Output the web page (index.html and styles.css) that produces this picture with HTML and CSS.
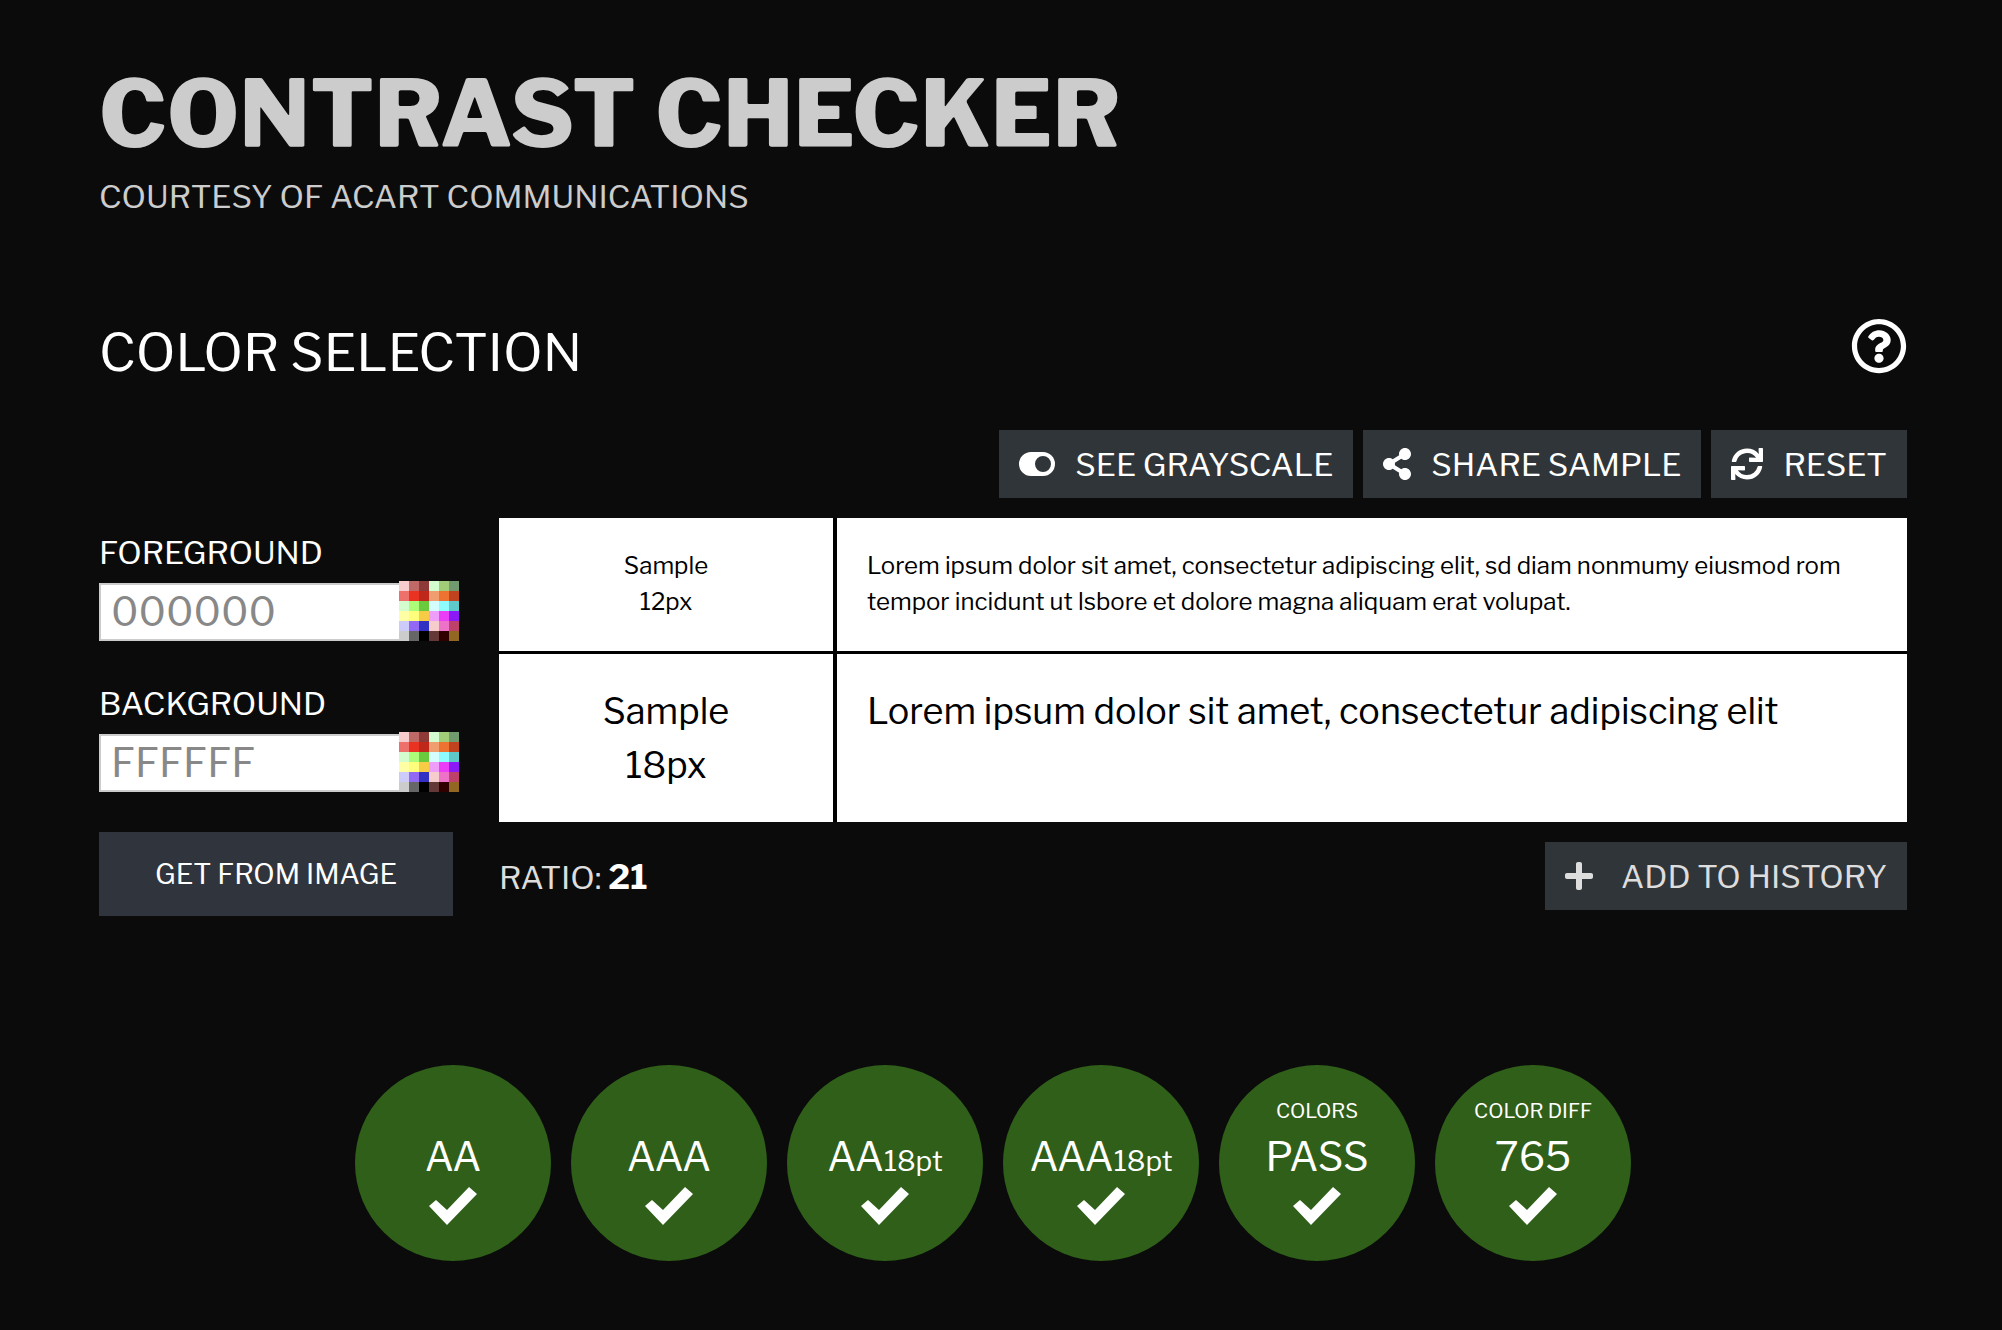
FILE: index.html
```
<!DOCTYPE html>
<html lang="en">
<head>
  <meta charset="UTF-8" />
  <meta name="viewport" content="width=device-width, initial-scale=1.0" />
  <title>Contrast Checker</title>
  <link rel="stylesheet" href="styles.css">
</head>
<body>
  <!-- icons shared by the page -->
  <svg class="sprite" aria-hidden="true">
    <symbol id="swatches" viewBox="0 0 60 60">
      <path fill="#f6cccc" d="M0 0h10v10H0z"/><path fill="#c06a68" d="M10 0h10v10H10z"/><path fill="#8e3a38" d="M20 0h10v10H20z"/><path fill="#d3fdcf" d="M30 0h10v10H30z"/><path fill="#a3cc78" d="M40 0h10v10H40z"/><path fill="#719a6e" d="M50 0h10v10H50z"/>
      <path fill="#ee706b" d="M0 10h10v10H0z"/><path fill="#ea3223" d="M10 10h10v10H10z"/><path fill="#bf271b" d="M20 10h10v10H20z"/><path fill="#f09d70" d="M30 10h10v10H30z"/><path fill="#ee7230" d="M40 10h10v10H40z"/><path fill="#c1421f" d="M50 10h10v10H50z"/>
      <path fill="#d3fdcf" d="M0 20h10v10H0z"/><path fill="#acfb79" d="M10 20h10v10H10z"/><path fill="#6aca3e" d="M20 20h10v10H20z"/><path fill="#d3fdfe" d="M30 20h10v10H30z"/><path fill="#8efbfd" d="M40 20h10v10H40z"/><path fill="#5fc9c9" d="M50 20h10v10H50z"/>
      <path fill="#fefea5" d="M0 30h10v10H0z"/><path fill="#fffe7c" d="M10 30h10v10H10z"/><path fill="#f6cb45" d="M20 30h10v10H20z"/><path fill="#ee9df8" d="M30 30h10v10H30z"/><path fill="#ea3ff7" d="M40 30h10v10H40z"/><path fill="#8c1af6" d="M50 30h10v10H50z"/>
      <path fill="#cccbfa" d="M0 40h10v10H0z"/><path fill="#9169f5" d="M10 40h10v10H10z"/><path fill="#3130c3" d="M20 40h10v10H20z"/><path fill="#f6cccc" d="M30 40h10v10H30z"/><path fill="#ee72c7" d="M40 40h10v10H40z"/><path fill="#bd4168" d="M50 40h10v10H50z"/>
      <path fill="#cccccc" d="M0 50h10v10H0z"/><path fill="#666666" d="M10 50h10v10H10z"/><path fill="#000000" d="M20 50h10v10H20z"/><path fill="#633836" d="M30 50h10v10H30z"/><path fill="#300000" d="M40 50h10v10H40z"/><path fill="#916722" d="M50 50h10v10H50z"/>
    </symbol>
    <symbol id="check" viewBox="0 0 48 38">
      <path d="M0 19l7-6 11 10L40 0l8 7-30 31z"/>
    </symbol>
  </svg>

  <header class="page-header">
    <h1>CONTRAST CHECKER</h1>
    <p>COURTESY OF ACART COMMUNICATIONS</p>
  </header>

  <main>
    <div class="section-head">
      <h2>COLOR SELECTION</h2>
      <button type="button" class="help" aria-label="Help">
        <svg viewBox="0 0 512 512"><path d="M256 8C119 8 8 119 8 256s111 248 248 248 248-111 248-248S393 8 256 8zm0 448c-110.500 0-200-89.400-200-200 0-110.500 89.500-200 200-200 110.500 0 200 89.500 200 200 0 110.500-89.400 200-200 200zm107-256c0 67-72 68-72 93v6c0 7-5 12-12 12h-46c-7 0-12-5-12-12v-9c0-35 27-49 47-61 17-9 28-16 28-29 0-17-22-28-40-28-23 0-34 11-49 30-4 5-11 6-17 2l-28-21c-5-4-6-11-3-17 24-35 54-55 102-55 50 0 102 39 102 89zM298 368c0 23-19 42-42 42s-42-19-42-42 19-42 42-42 42 19 42 42z"/></svg>
      </button>
    </div>

    <div class="toolbar">
      <button type="button" class="btn">
        <svg class="wide" viewBox="0 0 576 384"><path fill-rule="evenodd" d="M192 0h192a192 192 0 0 1 0 384H192a192 192 0 0 1 0-384zm192 64a128 128 0 1 0 0 256 128 128 0 0 0 0-256z"/></svg>
        SEE GRAYSCALE
      </button>
      <button type="button" class="btn">
        <svg class="share" viewBox="0 0 448 512"><path d="M352 320c-22.600 0-43.400 7.800-59.800 20.900l-102.500-64.100a96.600 96.600 0 0 0 0-41.600l102.500-64.100C308.600 184.200 329.400 192 352 192c53 0 96-43 96-96S405 0 352 0s-96 43-96 96c0 7.200.8 14.100 2.300 20.800l-102.500 64.100C139.400 167.800 118.600 160 96 160c-53 0-96 43-96 96s43 96 96 96c22.600 0 43.400-7.800 59.800-20.900l102.500 64.100A96.300 96.300 0 0 0 256 416c0 53 43 96 96 96s96-43 96-96-43-96-96-96z"/></svg>
        SHARE SAMPLE
      </button>
      <button type="button" class="btn">
        <svg viewBox="0 0 512 512"><path d="M440.700 12.600l4 82.800A247.200 247.200 0 0 0 255.800 8C134.700 8 33.900 94.900 12.300 209.800A12 12 0 0 0 24.100 224h49.100a12 12 0 0 0 11.700-9.300 175.900 175.900 0 0 1 317-56.900l-101.500-4.900a12 12 0 0 0-12.600 12v47.400a12 12 0 0 0 12 12H500a12 12 0 0 0 12-12V12a12 12 0 0 0-12-12h-47.400a12 12 0 0 0-11.900 12.600zM255.800 432a175.600 175.600 0 0 1-146-77.800l101.800 4.900a12 12 0 0 0 12.600-12v-47.400a12 12 0 0 0-12-12H12a12 12 0 0 0-12 12V500a12 12 0 0 0 12 12h47.400a12 12 0 0 0 12-12.600l-4.200-82.600A247.200 247.200 0 0 0 255.800 504c121.100 0 221.900-86.900 243.500-201.800a12 12 0 0 0-11.800-14.200h-49.100a12 12 0 0 0-11.700 9.300A175.900 175.900 0 0 1 255.800 432z"/></svg>
        RESET
      </button>
    </div>

    <div class="checker">
      <form class="colors">
        <div class="field">
          <label for="foreground">FOREGROUND</label>
          <div class="picker">
            <input type="text" id="foreground" value="000000" maxlength="6" />
            <button type="button" class="swatch" aria-label="Pick foreground"><svg><use href="#swatches"/></svg></button>
          </div>
        </div>
        <div class="field">
          <label for="background">BACKGROUND</label>
          <div class="picker">
            <input type="text" id="background" value="FFFFFF" maxlength="6" />
            <button type="button" class="swatch" aria-label="Pick background"><svg><use href="#swatches"/></svg></button>
          </div>
        </div>
        <button type="button" class="from-image">GET FROM IMAGE</button>
      </form>

      <div class="preview">
        <table class="samples">
          <tr class="small">
            <th scope="row">Sample<br>12px</th>
            <td>Lorem ipsum dolor sit amet, consectetur adipiscing elit, sd diam nonmumy eiusmod rom tempor incidunt ut lsbore et dolore magna aliquam erat volupat.</td>
          </tr>
          <tr class="large">
            <th scope="row">Sample<br>18px</th>
            <td>Lorem ipsum dolor sit amet, consectetur adipiscing elit</td>
          </tr>
        </table>
        <div class="summary">
          <p>RATIO: <strong>21</strong></p>
          <button type="button" class="btn muted">
            <svg class="plus" viewBox="0 0 448 448"><path d="M416 176H272V32c0-18-14-32-32-32h-32c-18 0-32 14-32 32v144H32c-18 0-32 14-32 32v32c0 18 14 32 32 32h144v144c0 18 14 32 32 32h32c18 0 32-14 32-32V272h144c18 0 32-14 32-32v-32c0-18-14-32-32-32z"/></svg>
            ADD TO HISTORY
          </button>
        </div>
      </div>
    </div>

    <ul class="results">
      <li><span class="score">AA</span><svg><use href="#check"/></svg></li>
      <li><span class="score">AAA</span><svg><use href="#check"/></svg></li>
      <li><span class="score">AA<small>18pt</small></span><svg><use href="#check"/></svg></li>
      <li><span class="score">AAA<small>18pt</small></span><svg><use href="#check"/></svg></li>
      <li><span class="caption">COLORS</span><span class="score">PASS</span><svg><use href="#check"/></svg></li>
      <li><span class="caption">COLOR DIFF</span><span class="score">765</span><svg><use href="#check"/></svg></li>
    </ul>
  </main>
</body>
</html>
```
FILE: styles.css
```
:root {
  --bg: #0b0b0b;
  --text: #ffffff;
  --muted: #cccccc;
  --button: #303539;
  --pass: #2f5f19;
}

* {
  box-sizing: border-box;
}

body {
  font-family: "Libre Franklin", "Liberation Sans", Arial, sans-serif;
  background: var(--bg);
  color: var(--text);
  margin: 0;
  padding: 58px 95px 68px 99px;
}

h1, h2, p, ul {
  margin: 0;
}

svg {
  display: block;
  fill: currentColor;
}

button {
  font-family: inherit;
  color: inherit;
  border: none;
  padding: 0;
  cursor: pointer;
}

.sprite {
  position: absolute;
  width: 0;
  height: 0;
}

/* Header */
.page-header {
  color: var(--muted);
}

h1 {
  font-size: 93px;
  font-weight: 800;
  line-height: 112px;
}

.page-header p {
  font-size: 32px;
  line-height: 54px;
}

.section-head {
  display: flex;
  justify-content: space-between;
  align-items: flex-start;
  margin-top: 92px;
}

h2 {
  font-size: 52px;
  font-weight: 400;
  line-height: 74px;
}

.help {
  background: none;
  margin-top: 2px;
}

.help svg {
  width: 56px;
  height: 56px;
}

/* Buttons */
.toolbar {
  display: flex;
  justify-content: flex-end;
  gap: 10px;
  margin-top: 40px;
}

.btn {
  display: flex;
  align-items: center;
  gap: 20px;
  height: 68px;
  padding: 0 20px;
  font-size: 32px;
  background: var(--button);
}

.btn svg {
  width: 32px;
  height: 32px;
}

.btn svg.wide {
  width: 36px;
  height: 24px;
}

.btn svg.share {
  width: 28px;
}

.btn svg.plus {
  width: 28px;
  height: 28px;
}

.btn.muted {
  color: #dddddd;
  gap: 28px;
}

/* Colour inputs and samples */
.checker {
  display: grid;
  grid-template-columns: 360px 1fr;
  gap: 40px;
  margin-top: 20px;
}

.colors {
  padding-top: 12px;
}

.field {
  margin-bottom: 40px;
}

.field label {
  display: block;
  font-size: 32px;
  line-height: 46px;
  margin-bottom: 5px;
}

.picker {
  display: flex;
  align-items: flex-end;
}

.picker input {
  flex: 1;
  min-width: 0;
  height: 58px;
  padding: 0 10px 2px;
  font-family: inherit;
  font-size: 40px;
  color: #888888;
  background: #ffffff;
  border: 2px solid #cccccc;
  border-right: none;
}

.swatch svg {
  width: 60px;
  height: 60px;
}

.from-image {
  display: block;
  width: 354px;
  height: 84px;
  font-size: 28px;
  background: #30343c;
}

.samples {
  width: 100%;
  background: #000000;
  border-collapse: collapse;
  color: #000000;
}

.samples th,
.samples td {
  background: #ffffff;
  font-weight: 400;
  text-align: left;
  vertical-align: top;
  padding: 30px 30px 28px;
}

.samples th {
  width: 336px;
  text-align: center;
  border-right: 4px solid #000000;
}

.samples .small {
  height: 134px;
  font-size: 24px;
  line-height: 36px;
  border-bottom: 3px solid #000000;
}

.samples .large {
  height: 170px;
  font-size: 36px;
  line-height: 54px;
}

.summary {
  display: flex;
  justify-content: space-between;
  align-items: center;
  margin-top: 20px;
  font-size: 32px;
  color: #dddddd;
}

.summary strong {
  font-size: 34px;
  color: #ffffff;
}

/* Results */
.results {
  display: flex;
  justify-content: center;
  gap: 20px;
  list-style: none;
  padding: 0 20px 0 0;
  margin-top: 149px;
}

.results li {
  display: flex;
  flex-direction: column;
  align-items: center;
  justify-content: flex-end;
  width: 196px;
  height: 196px;
  padding-bottom: 36px;
  border-radius: 50%;
  background: var(--pass);
}

.results svg {
  width: 48px;
  height: 38px;
}

.caption {
  font-size: 20px;
  line-height: 24px;
  margin-bottom: 6px;
}

.score {
  font-size: 40px;
  line-height: 56px;
  margin-bottom: 2px;
}

.score small {
  font-size: 28px;
  line-height: 28px;
}
```
